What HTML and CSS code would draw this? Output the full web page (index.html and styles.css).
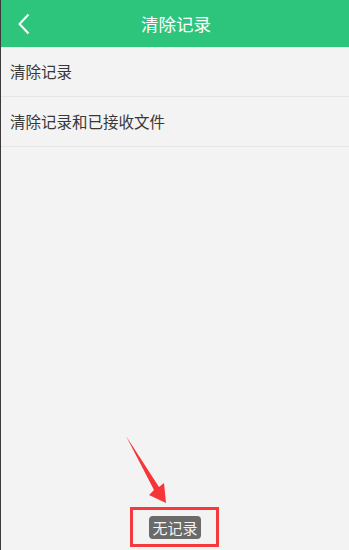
FILE: index.html
```html
<!DOCTYPE html>
<html lang="zh">
<head>
<meta charset="utf-8">
<link rel="stylesheet" href="styles.css">
</head>
<body>
<div class="page">
  <header class="bar">
    <svg class="back" width="14" height="22" viewBox="0 0 14 22"><path d="M11.5 1.5 L2.5 11 L11.5 20.5" fill="none" stroke="#fff" stroke-width="2"/></svg>
    <div class="title">清除记录</div>
  </header>
  <div class="list">
    <div class="row">清除记录</div>
    <div class="row">清除记录和已接收文件</div>
  </div>
  <div class="spacer"></div>
  <div class="bottom">
    <div class="mark"><span class="toast">无记录</span></div>
  </div>
  <svg class="arrow" width="349" height="550" viewBox="0 0 349 550"><polygon points="126,436 159,487 164,483 166,503 149,495 154,490" fill="#f53538"/></svg>
</div>
</body>
</html>
```
FILE: styles.css
```css
html, body { margin: 0; padding: 0; }
body { font-family: "Noto Sans CJK SC", "Noto Sans", sans-serif; background: #f3f3f3; }
.page { position: relative; height: 550px; display: flex; flex-direction: column; border-left: 1px solid #3a3a3a; box-sizing: border-box; }
.bar { height: 47px; background: #2dc47c; position: relative; display: flex; align-items: center; justify-content: center; flex-shrink: 0; }
.back { position: absolute; left: 16px; top: 13px; }
.title { color: #fff; font-size: 17.5px; line-height: 1; margin-left: 2px; }
.list { display: flex; flex-direction: column; }
.row { height: 49px; border-bottom: 1px solid #e6e6e6; display: flex; align-items: center; padding-left: 9px; padding-bottom: 2px; box-sizing: border-box; height: 50px; font-size: 15.5px; color: #383838; }
.row:first-child { border-top: 1px solid #ececec; }
.spacer { flex: 1; }
.bottom { display: flex; justify-content: center; padding-bottom: 3px; }
.mark { width: 89px; height: 40px; box-sizing: border-box; border: 3px solid #f43a3c; display: flex; align-items: center; justify-content: center; margin-left: -2px; }
.toast { background: #6a6a6a; color: #f4f4f4; font-size: 15px; line-height: 23px; padding: 0 3px; border-radius: 4px; margin-left: 2px; }
.arrow { position: absolute; left: -1px; top: 0; pointer-events: none; }
```
